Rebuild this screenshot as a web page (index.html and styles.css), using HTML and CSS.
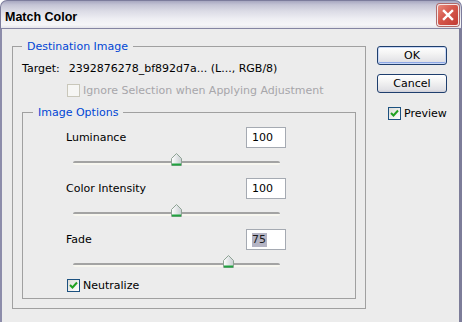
FILE: index.html
```
<!DOCTYPE html>
<html>
<head>
<meta charset="utf-8">
<link rel="stylesheet" href="styles.css">
</head>
<body>
<div class="window">
  <div class="titlebar">
    <span class="title">Match Color</span>
    <div class="close">
      <svg width="22" height="22" viewBox="0 0 22 22"><path d="M6.5 6.5 L15.5 15.5 M15.5 6.5 L6.5 15.5" stroke="#fff" stroke-width="2.6" stroke-linecap="square"/></svg>
    </div>
  </div>
  <div class="client">
    <fieldset class="group outer">
      <legend>Destination Image</legend>
      <div class="target"><span>Target:</span><span>2392876278_bf892d7a... (L..., RGB/8)</span></div>
      <div class="check-row indent disabled"><span class="box box-disabled"></span><span>Ignore Selection when Applying Adjustment</span></div>
      <fieldset class="group inner">
        <legend>Image Options</legend>
        <div class="slider-group">
          <div class="row"><span>Luminance</span><div class="field">100</div></div>
          <div class="track-area"><div class="track">
            <svg class="thumb" style="left:50%" width="11" height="13" viewBox="0 0 11 13"><defs><linearGradient id="t1" x1="0" x2="1"><stop offset="0" stop-color="#ffffff"/><stop offset="1" stop-color="#c9ced2"/></linearGradient></defs><path d="M5.5 0.5 L10.5 5.5 V12.5 H0.5 V5.5 Z" fill="url(#t1)" stroke="#8ea394"/><rect x="1" y="10.5" width="9" height="2" fill="#21a340"/></svg>
          </div></div>
        </div>
        <div class="slider-group">
          <div class="row"><span>Color Intensity</span><div class="field">100</div></div>
          <div class="track-area"><div class="track">
            <svg class="thumb" style="left:50%" width="11" height="13" viewBox="0 0 11 13"><defs><linearGradient id="t2" x1="0" x2="1"><stop offset="0" stop-color="#ffffff"/><stop offset="1" stop-color="#c9ced2"/></linearGradient></defs><path d="M5.5 0.5 L10.5 5.5 V12.5 H0.5 V5.5 Z" fill="url(#t2)" stroke="#8ea394"/><rect x="1" y="10.5" width="9" height="2" fill="#21a340"/></svg>
          </div></div>
        </div>
        <div class="slider-group">
          <div class="row"><span>Fade</span><div class="field"><span class="sel">75</span></div></div>
          <div class="track-area"><div class="track">
            <svg class="thumb" style="left:75%" width="11" height="13" viewBox="0 0 11 13"><defs><linearGradient id="t3" x1="0" x2="1"><stop offset="0" stop-color="#ffffff"/><stop offset="1" stop-color="#c9ced2"/></linearGradient></defs><path d="M5.5 0.5 L10.5 5.5 V12.5 H0.5 V5.5 Z" fill="url(#t3)" stroke="#8ea394"/><rect x="1" y="10.5" width="9" height="2" fill="#21a340"/></svg>
          </div></div>
        </div>
        <div class="check-row neutral"><span class="box box-checked"><svg width="11" height="11" viewBox="0 0 11 11"><path d="M2 5 L4.5 7.5 L9 2.5" fill="none" stroke="#21a121" stroke-width="2"/></svg></span><span>Neutralize</span></div>
      </fieldset>
    </fieldset>
    <div class="side">
      <div class="btn btn-default">OK</div>
      <div class="btn">Cancel</div>
      <div class="check-row preview"><span class="box box-checked"><svg width="11" height="11" viewBox="0 0 11 11"><path d="M2 5 L4.5 7.5 L9 2.5" fill="none" stroke="#21a121" stroke-width="2"/></svg></span><span>Preview</span></div>
    </div>
  </div>
</div>
</body>
</html>
```
FILE: styles.css
```
* { box-sizing: border-box; }
html, body { margin: 0; padding: 0; background: #ffffff; }
body {
  font-family: "DejaVu Sans", sans-serif;
  font-size: 11px;
  line-height: 13px;
  color: #000;
}
.window {
  width: 462px;
  height: 322px;
  display: flex;
  flex-direction: column;
  overflow: hidden;
}
.titlebar {
  flex: none;
  height: 29px;
  display: flex;
  align-items: flex-start;
  justify-content: space-between;
  padding: 0 2px 0 4px;
  border: 1px solid #7c7c9c;
  border-bottom-color: #8585a2;
  border-radius: 7px 7px 0 0;
  background: linear-gradient(to bottom, #a7a7c0 0%, #c4c4d5 14%, #dcdce6 38%, #eeeef3 66%, #f6f6f8 88%, #e4e4ea 100%);
}
.title {
  margin-top: 9px;
  font-family: "Liberation Sans", sans-serif;
  font-weight: bold;
  font-size: 12.5px;
  line-height: 14px;
  color: #000;
}
.close {
  margin-top: 3px;
  width: 22px;
  height: 22px;
  border: 1px solid #f4e8e8;
  border-radius: 3px;
  background: linear-gradient(135deg, #e98a7c 0%, #d5584c 45%, #c23a34 100%);
  box-shadow: 0 0 0 1px #b06a6a;
  display: flex;
  align-items: center;
  justify-content: center;
}
.close svg { display: block; }
.client {
  flex: 1;
  display: flex;
  align-items: flex-start;
  background: #ececec;
  border-left: 2px solid #8c8caa;
  border-right: 3px solid #7d7d99;
  padding-left: 10px;
}
.group {
  margin: 0;
  border: 1px solid #a0a0a0;
  min-inline-size: 0;
}
.group legend {
  padding: 0 5px;
  color: #0046d5;
  line-height: 13px;
}
.outer {
  width: 354px;
  margin-top: 11px;
  padding: 9px 9px 9px 9px;
}
.target {
  display: flex;
  gap: 9px;
  height: 13px;
}
.check-row {
  display: flex;
  align-items: center;
  gap: 3px;
  height: 13px;
}
.indent {
  margin-top: 9px;
  padding-left: 45px;
}
.disabled { color: #a7a6aa; }
.box {
  width: 13px;
  height: 13px;
  flex: none;
  display: flex;
  align-items: center;
  justify-content: center;
}
.box-disabled {
  border: 1px solid #c9c7ba;
  background: #f6f6f4;
}
.box-checked {
  border: 1px solid #1c5180;
  background: linear-gradient(135deg, #dcdcd7 0%, #ffffff 100%);
}
.box svg { display: block; }
.inner {
  width: 334px;
  margin-top: 9px;
  padding: 8px 10px 6px 10px;
}
.slider-group {
  margin-left: 33px;
  width: 220px;
  margin-bottom: 2px;
}
.row {
  display: flex;
  justify-content: space-between;
  align-items: center;
  height: 21px;
}
.field {
  width: 40px;
  height: 21px;
  border: 1px solid #a5aab2;
  background: #fff;
  padding: 3px 0 0 5px;
  line-height: 13px;
}
.sel {
  display: inline-block;
  background: #b4b4c4;
  color: #1a1a1a;
  line-height: 14px;
  margin-top: -1px;
  padding: 0 1px 0 0;
}
.track-area {
  height: 28px;
  padding-top: 13px;
}
.track {
  position: relative;
  margin-left: 7px;
  width: 207px;
  height: 4px;
  border-top: 2px solid #a3a3a3;
  border-radius: 2px;
  background: #f7f6ef;
}
.thumb {
  position: absolute;
  top: -10px;
  margin-left: -5.5px;
  display: block;
}
.neutral {
  margin-top: -1px;
  margin-left: 34px;
}
.side {
  width: 70px;
  margin-left: 11px;
  margin-top: 17px;
  display: flex;
  flex-direction: column;
}
.btn {
  height: 19px;
  border: 1px solid #1f3f6e;
  border-radius: 3px;
  background: linear-gradient(to bottom, #ffffff 0%, #f3f3f3 40%, #e2e2e6 85%, #cfcfd8 100%);
  text-align: center;
  line-height: 17px;
}
.btn + .btn { margin-top: 9px; }
.btn-default {
  box-shadow: inset 0 0 0 1px #c9d8f6, inset 0 -2px 0 0 #8ea8e6;
}
.preview {
  margin-top: 14px;
  margin-left: 11px;
}
```
